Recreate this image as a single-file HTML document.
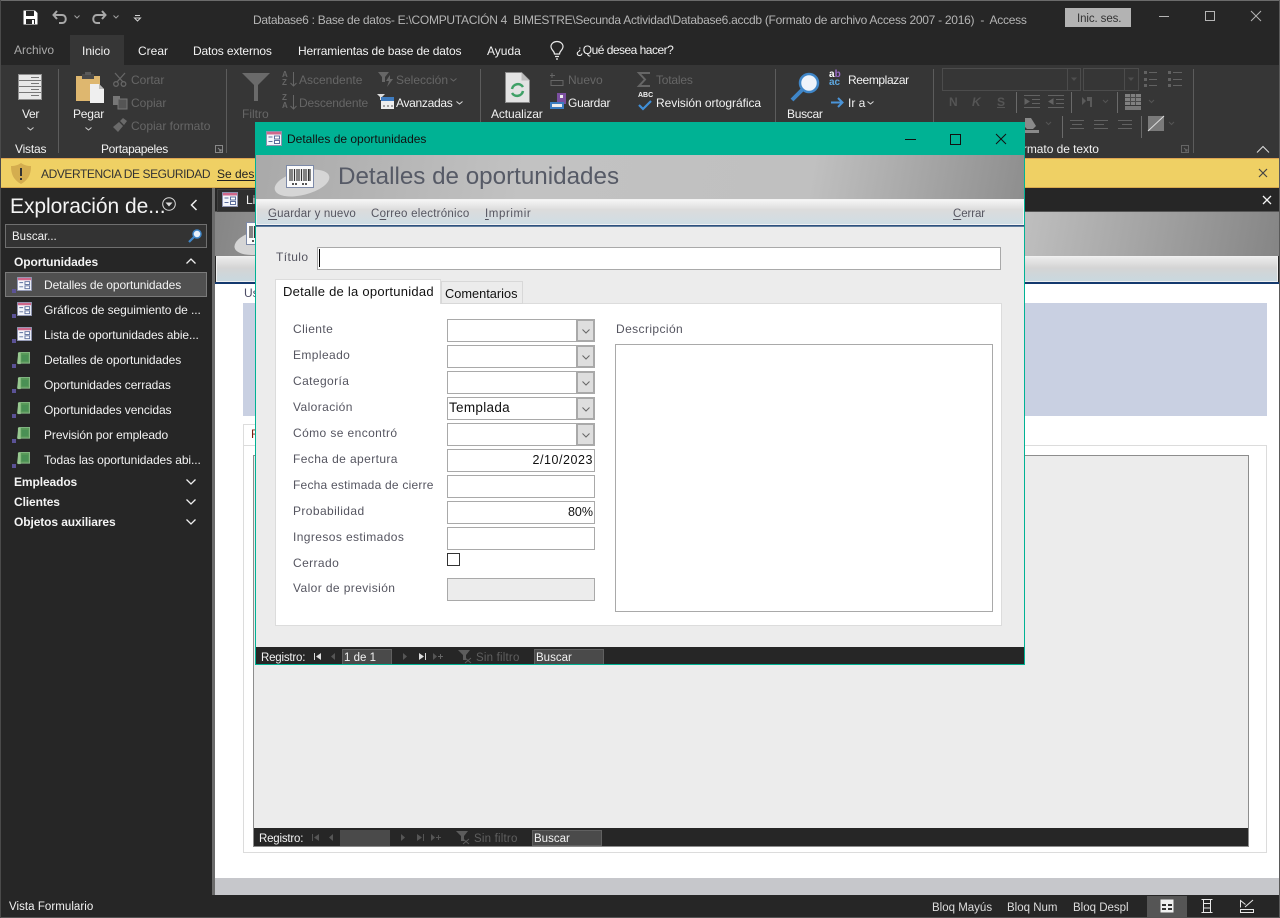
<!DOCTYPE html>
<html lang="es">
<head>
<meta charset="utf-8">
<title>Detalles de oportunidades</title>
<style>
html,body{margin:0;padding:0;width:1280px;height:918px;overflow:hidden;background:#262626}
body{position:relative;font-family:"Liberation Sans",sans-serif;font-size:12px;color:#f0f0f0}
.t{position:absolute;line-height:14px;white-space:pre}
.b{position:absolute;box-sizing:border-box}
.d{color:#666}
.w{color:#f2f2f2}
.h{font-weight:bold;color:#f4f4f4}
.l{color:#555560;letter-spacing:.4px}
.k{color:#111}
.n{letter-spacing:-.09px}
svg{position:absolute;overflow:visible}
.sep{position:absolute;width:1px;background:#5c5c5c;top:69px;height:84px}
.f{position:absolute;box-sizing:border-box;left:447px;width:148px;height:23px;background:#fff;border:1px solid #a9a9a9}
.dd{position:absolute;right:0;top:0;width:18px;height:21px;background:#dedede;border:2px solid #a9a9a9;border-width:1px 1px 1px 2px;box-sizing:border-box}
.u{text-decoration:underline;text-underline-offset:2px;text-decoration-thickness:1px}
</style>
</head>
<body>
<svg width="0" height="0" style="position:absolute">
<defs>
<symbol id="frm" viewBox="0 0 16 15">
<rect x=".5" y=".5" width="15" height="14" fill="#f4f6fb" stroke="#8d93b0"/>
<rect x="1" y="1" width="14" height="2.5" fill="#d0688c"/>
<path d="M2.5 6h4M2.5 10.500h4" stroke="#5d6f9e" fill="none"/>
<rect x="8.500" y="5" width="5" height="3" fill="#fff" stroke="#5d6f9e"/>
<rect x="8.500" y="9.500" width="5" height="3" fill="#fff" stroke="#5d6f9e"/>
</symbol>
<symbol id="rep" viewBox="0 0 14 14">
<path d="M2 .5h11.500v11.500H.5z" fill="#5a9a5a" stroke="#86b886"/>
<rect x="1" y="1" width="3" height="12" fill="#98c890"/>
<path d="M5 3h7v7H5z" fill="#4a9055"/>
</symbol>
<symbol id="bar" viewBox="0 0 28 23">
<rect x=".5" y=".5" width="27" height="22" fill="#fbfbfb" stroke="#7d8aa8"/>
<path d="M4 4v12M6 4v12M8.500 4v12M11 4v12M13 4v12M15.500 4v12M18 4v12M20 4v12M22.500 4v12M24 4v12" stroke="#333" stroke-width="1.200"/>
<path d="M6 19h6M16 19h6" stroke="#555" stroke-width="2" stroke-dasharray="2 1"/>
</symbol>
<symbol id="lnk" viewBox="0 0 5 5"><path d="M0 1h4v4H0z" fill="#5b5296"/></symbol>
</defs>
</svg>

<!-- top window -->
<div class="b" style="left:0;top:0;width:1280px;height:1px;background:#6b6b6b"></div>
<svg style="left:23px;top:10px" width="15" height="15" viewBox="0 0 15 15"><path d="M.5.500h11.500l2.500 2.500v11.500H.5z" fill="#fff"/><rect x="3" y="1" width="8" height="5" fill="#262626"/><rect x="3" y="9" width="9" height="5" fill="#262626"/><rect x="9" y="10" width="2" height="4" fill="#fff"/></svg>
<svg style="left:52px;top:10px" width="16" height="15" viewBox="0 0 16 15" fill="none" stroke="#a8a8a8" stroke-width="2"><path d="M5 1L1.500 5 5 9M2 5h8c5 0 5 8 0 8H7"/></svg>
<svg style="left:74px;top:15px" width="6" height="4" fill="none" stroke="#a0a0a0"><path d="M.5.500L3 3 5.500.5"/></svg>
<svg style="left:91px;top:10px" width="16" height="15" viewBox="0 0 16 15" fill="none" stroke="#a8a8a8" stroke-width="2"><path d="M11 1l3.500 4L11 9M14 5H6c-5 0-5 8 0 8h3"/></svg>
<svg style="left:113px;top:15px" width="6" height="4" fill="none" stroke="#a0a0a0"><path d="M.5.500L3 3 5.500.5"/></svg>
<svg style="left:134px;top:15px" width="7" height="7" fill="none" stroke="#d0d0d0"><path d="M1 .5h5M.5 3h6L3.500 6z" /></svg>
<div class="t" style="left:253px;top:13px;color:#b5b5b5;font-size:12px;letter-spacing:-.275px">Database6 : Base de datos- E:\COMPUTACIÓN 4  BIMESTRE\Secunda Actividad\Database6.accdb (Formato de archivo Access 2007 - 2016)  -  Access</div>
<div class="b" style="left:1065px;top:8px;width:66px;height:19px;background:#b3b3b3"></div>
<div class="t" style="left:1077px;top:12px;color:#333;font-size:11.500px;letter-spacing:-.1px">Inic. ses.</div>
<svg style="left:1159px;top:10px" width="110" height="12" fill="none" stroke="#b5b5b5"><path d="M0 6.500h10M46.500 1.500h9v9h-9zM92 1l10 10M102 1L92 11"/></svg>

<!-- tabs -->
<div class="b" style="left:70px;top:35px;width:54px;height:30px;background:#363636"></div>
<div class="t" style="left:14px;top:43px;color:#a9a9a9">Archivo</div>
<div class="t w" style="left:82px;top:44px">Inicio</div>
<div class="t w" style="left:138px;top:44px">Crear</div>
<div class="t w" style="left:193px;top:44px;letter-spacing:-.14px">Datos externos</div>
<div class="t w" style="left:298px;top:44px;letter-spacing:-.14px">Herramientas de base de datos</div>
<div class="t w" style="left:487px;top:44px">Ayuda</div>
<svg style="left:550px;top:41px" width="14" height="19" viewBox="0 0 14 19" fill="none" stroke="#e8e8e8" stroke-width="1.200"><path d="M4.500 13c0-3-3.500-4-3.500-7.500a6 5 0 0 1 12 0C13 9 9.500 10 9.500 13zM5 15.500h4M6 18h2"/></svg>
<div class="t w" style="left:576px;top:43px;letter-spacing:-.52px">¿Qué desea hacer?</div>

<!-- ribbon -->
<div class="b" style="left:0;top:65px;width:1280px;height:93px;background:#363636"></div>
<div class="sep" style="left:58px"></div>
<div class="sep" style="left:226px"></div>
<div class="sep" style="left:480px"></div>
<div class="sep" style="left:775px"></div>
<div class="sep" style="left:933px"></div>
<div class="sep" style="left:1193px"></div>

<svg style="left:17px;top:73px" width="26" height="28" viewBox="0 0 26 28"><rect x="1.500" y="1.500" width="23" height="25" fill="#e8e8e8" stroke="#8f8f8f"/><path d="M2 7.500h22M2 13.500h22M2 19.500h22M14 4.500h8M14 10.500h8M14 16.500h8M14 22.500h8" stroke="#777"/></svg>
<div class="t w" style="left:22px;top:107px;letter-spacing:-.3px">Ver</div>
<svg style="left:27px;top:127px" width="7" height="4" fill="none" stroke="#d0d0d0"><path d="M.5.500L3.500 3l3-2.500"/></svg>
<div class="t w" style="left:15px;top:142px;letter-spacing:-.2px">Vistas</div>

<svg style="left:75px;top:72px" width="30" height="32" viewBox="0 0 30 32"><path d="M1 4h24v25H1z" fill="#deb76f"/><rect x="7" y="2" width="12" height="5" fill="#4a4a4a"/><rect x="10" y="0" width="6" height="3" fill="#5a5a5a"/><path d="M15 12h9l5 5v14H15z" fill="#efefef"/><path d="M24 12v5h5" fill="#bbb"/></svg>
<div class="t w" style="left:73px;top:107px;letter-spacing:-.2px">Pegar</div>
<svg style="left:85px;top:127px" width="7" height="4" fill="none" stroke="#d0d0d0"><path d="M.5.500L3.500 3l3-2.500"/></svg>
<div class="t w" style="left:101px;top:142px;letter-spacing:-.32px">Portapapeles</div>
<svg style="left:215px;top:145px" width="8" height="8" fill="none" stroke="#888"><path d="M.5 7.500V.5h7v7zM3 3l3 3M6 4v2H4"/></svg>

<svg style="left:113px;top:72px" width="14" height="15" fill="none" stroke="#666" stroke-width="1.300"><path d="M2 1l8 9M12 1l-8 9"/><circle cx="3" cy="12" r="2.300"/><circle cx="10.500" cy="12" r="2.300"/></svg>
<div class="t d" style="left:131px;top:73px">Cortar</div>
<svg style="left:113px;top:95px" width="15" height="15"><path d="M0 1h7v9H0z" fill="#777"/><path d="M5 4h9v10H5z" fill="#555" stroke="#777"/></svg>
<div class="t d" style="left:131px;top:96px">Copiar</div>
<svg style="left:113px;top:118px" width="15" height="14" fill="#6a6a6a"><path d="M0 9l6-5 4 4-5 6zM7 3l3-3 4 3-3 4z"/></svg>
<div class="t d" style="left:131px;top:119px">Copiar formato</div>

<svg style="left:241px;top:72px" width="30" height="30" fill="#6a6a6a"><path d="M1 1h28L17 13v16h-4V13z"/></svg>
<div class="t d" style="left:242px;top:107px">Filtro</div>
<div class="t d" style="left:282px;top:71px;font-size:8px;line-height:8px;font-weight:bold">A<br>Z</div>
<svg style="left:290px;top:72px" width="7" height="15" fill="none" stroke="#666"><path d="M3.500 0v14M.5 11l3 3 3-3"/></svg>
<div class="t d" style="left:299px;top:73px">Ascendente</div>
<div class="t d" style="left:282px;top:94px;font-size:8px;line-height:8px;font-weight:bold">Z<br>A</div>
<svg style="left:290px;top:95px" width="7" height="15" fill="none" stroke="#666"><path d="M3.500 0v14M.5 11l3 3 3-3"/></svg>
<div class="t d" style="left:299px;top:96px;letter-spacing:-.15px">Descendente</div>
<svg style="left:378px;top:72px" width="16" height="15" fill="#666"><path d="M0 0h11L7 5v5H4V5zM12 3l-4 6h3l-2 6 6-8h-3z"/></svg>
<div class="t d" style="left:396px;top:73px">Selección</div>
<svg style="left:450px;top:78px" width="7" height="4" fill="none" stroke="#666"><path d="M.5.500L3.500 3l3-2.500"/></svg>
<svg style="left:377px;top:94px" width="17" height="15"><path d="M0 0h8L5 3v3H3V3z" fill="#ddd"/><rect x="4" y="3" width="13" height="12" fill="#eee"/><rect x="4" y="3" width="13" height="4" fill="#3f7cc0"/><path d="M6 12h2M10 12h2M14 12h2" stroke="#555"/></svg>
<div class="t w" style="left:396px;top:96px;letter-spacing:-.3px">Avanzadas</div>
<svg style="left:456px;top:101px" width="7" height="4" fill="none" stroke="#ddd"><path d="M.5.500L3.500 3l3-2.500"/></svg>

<svg style="left:505px;top:72px" width="25" height="31" viewBox="0 0 25 31"><path d="M.5.500h16l8 8v22H.5z" fill="#e3e3e3" stroke="#8a8a8a"/><path d="M16.500.5v8h8" fill="#bbb"/><path d="M7 17a6 6 0 0 1 11-2M18 19a6 6 0 0 1-11 2" fill="none" stroke="#3fa066" stroke-width="2.500"/></svg>
<div class="t w" style="left:491px;top:107px;letter-spacing:-.1px">Actualizar</div>
<svg style="left:549px;top:72px" width="16" height="15" fill="none" stroke="#666"><path d="M3 1v5M1 3.500h5M2 8.500h12v5H2z"/></svg>
<div class="t d" style="left:568px;top:73px">Nuevo</div>
<svg style="left:550px;top:93px" width="17" height="17"><rect x="7" y="0" width="9" height="11" fill="#7b4fa0"/><rect x="10" y="2" width="3" height="3" fill="#eee"/><rect x="0" y="9" width="14" height="7" fill="#3a7cc0"/><rect x="2" y="11" width="10" height="3" fill="#eee"/></svg>
<div class="t w" style="left:568px;top:96px;letter-spacing:-.25px">Guardar</div>
<svg style="left:637px;top:71px" width="15" height="17" fill="none" stroke="#666" stroke-width="2"><path d="M13 2H2l6 6.500L2 15h11"/></svg>
<div class="t d" style="left:656px;top:73px;letter-spacing:-.2px">Totales</div>
<div class="t w" style="left:638px;top:92px;font-size:7px;line-height:8px;font-weight:bold">ABC</div>
<svg style="left:638px;top:100px" width="15" height="10" fill="none" stroke="#3f8fd8" stroke-width="2.200"><path d="M1 5l4 4 8-8"/></svg>
<div class="t w" style="left:656px;top:96px;letter-spacing:-.05px">Revisión ortográfica</div>

<svg style="left:790px;top:72px" width="30" height="30" viewBox="0 0 30 30"><circle cx="19" cy="11" r="9" fill="#eef3fa" stroke="#3f86c8" stroke-width="2.500"/><path d="M12 18L2 28" stroke="#3f86c8" stroke-width="4"/></svg>
<div class="t w" style="left:787px;top:107px;letter-spacing:-.3px">Buscar</div>
<div class="t" style="left:829px;top:71px;font-size:10px;line-height:8px;color:#fff;font-weight:bold">a<span style="color:#9b6cc8">b</span><br><span style="color:#5fa8e0">ac</span></div>
<div class="t w" style="left:848px;top:73px;letter-spacing:-.4px">Reemplazar</div>
<svg style="left:831px;top:97px" width="13" height="11" fill="none" stroke="#4a94d8" stroke-width="2"><path d="M0 5.500h11M7 1l4.500 4.500L7 10"/></svg>
<div class="t w" style="left:848px;top:96px">Ir a</div>
<svg style="left:867px;top:101px" width="7" height="4" fill="none" stroke="#ddd"><path d="M.5.500L3.500 3l3-2.500"/></svg>

<!-- text format group -->
<svg style="left:0;top:0" width="1280" height="160" fill="none" stroke="#626262">
<g stroke="#4c4c4c"><path d="M942.500 68.500h138v22h-138zM1067.500 68.500v22M1083.500 68.500h55v22h-55zM1124.500 68.500v22"/></g>
<path d="M1071 77.500h6l-3 3.500zM1128 77.500h6l-3 3.500z" fill="#4f4f4f" stroke="none"/>
<path d="M1149 72.500h8M1149 79.500h8M1149 85.500h8M1173 72.500h9M1173 79.500h9M1173 85.500h9"/>
<path d="M1144 71h3v3h-3zM1144 78h3v3h-3zM1144 84h3v3h-3z" fill="#626262" stroke="none"/>
<path d="M1168 71h3v3h-3zM1168 78h3v3h-3zM1168 84h3v3h-3z" fill="#626262" stroke="none"/>
<path d="M1016.500 92v21M1071.500 92v21M1117.500 92v21M1062.500 116v22M1141.500 116v22" stroke="#6a6a6a"/>
<path d="M1024 95.500h16M1032 99.500h8M1032 103.500h8M1024 107.500h16M1048 95.500h16M1056 99.500h8M1056 103.500h8M1048 107.500h16"/>
<path d="M1025 99l4 2.500-4 2.500zM1053 99l-4 2.500 4 2.500z" fill="#626262"/>
<path d="M1082 97l4 4-4 4zM1087 97h5v10h-2v-6h-3z" fill="#5a5a5a" stroke="none"/>
<path d="M1103 100l2.500 2.500 2.500-2.500M1149 100l2.500 2.500 2.500-2.500M1169 122l2.500 2.500 2.500-2.500M1046 122l2.500 2.500 2.500-2.500" stroke="#555"/>
<rect x="1125" y="94" width="16" height="11" fill="#808080" stroke="none"/>
<path d="M1125 97.500h16M1125 101.500h16M1130.500 94v11M1135.500 94v11" stroke="#4a4a4a"/>
<rect x="1125" y="106" width="16" height="4" fill="#777" stroke="none"/>
<path d="M1070 120.500h14M1072 124.500h10M1070 128.500h14M1094 120.500h14M1094 124.500h10M1094 128.500h14M1118 120.500h14M1122 124.500h10M1118 128.500h14"/>
<rect x="1148" y="116" width="16" height="15" fill="#7a7a7a" stroke="none"/>
<path d="M1148 131l16-15" stroke="#ddd"/>
<path d="M1025 118l6 0 5 8-3 3h-6l-2-2z" fill="#8a8a8a" stroke="none"/>
<rect x="1025" y="130" width="14" height="3" fill="#8a8a8a" stroke="none"/>
</svg>
<div class="t" style="left:949px;top:95px;font-weight:bold;color:#555">N</div>
<div class="t" style="left:972px;top:95px;font-weight:bold;font-style:italic;color:#555">K</div>
<div class="t" style="left:997px;top:95px;font-weight:bold;color:#555;text-decoration:underline">S</div>
<div class="t w" style="left:1009px;top:142px;letter-spacing:-.05px">Formato de texto</div>
<svg style="left:1181px;top:145px" width="8" height="8" fill="none" stroke="#666"><path d="M.5 7.500V.5h7v7zM3 3l3 3M6 4v2H4"/></svg>
<svg style="left:1256px;top:145px" width="14" height="8" fill="none" stroke="#ddd"><path d="M1 7.500l6-6 6 6"/></svg>

<!-- security bar -->
<div class="b" style="left:0;top:158px;width:1280px;height:30px;background:#efd064;border-top:1px solid #e0a552;border-bottom:1px solid #d8a94e"></div>
<svg style="left:11px;top:163px" width="20" height="21" viewBox="0 0 20 21"><path d="M10 0c3 2 6 3 10 3 0 9-3 14-10 18C3 17 0 12 0 3c4 0 7-1 10-3z" fill="#d4ad4f"/><path d="M10 5v8" stroke="#333" stroke-width="2"/><rect x="9" y="15" width="2" height="2" fill="#333"/></svg>
<div class="t" style="left:41px;top:167px;color:#333;letter-spacing:-.42px">ADVERTENCIA DE SEGURIDAD</div>
<div class="t u" style="left:217px;top:167px;color:#222">Se deshabilitó</div>
<svg style="left:1258px;top:168px" width="10" height="10" fill="none" stroke="#444" stroke-width="1.200"><path d="M1 1l8 8M9 1L1 9"/></svg>

<!-- nav pane -->
<div class="b" style="left:212px;top:188px;width:3px;height:707px;background:#6b6b6b"></div>
<div class="t" style="left:10px;top:194px;font-size:21px;line-height:25px;color:#f4f4f4;letter-spacing:-.05px">Exploración de...</div>
<svg style="left:162px;top:197px" width="14" height="14" fill="none" stroke="#ddd"><circle cx="7" cy="7" r="6.300"/><path d="M3.500 5.500h7L7 9.500z" fill="#ddd" stroke="none"/></svg>
<svg style="left:190px;top:199px" width="8" height="12" fill="none" stroke="#eee" stroke-width="1.500"><path d="M6.500 1L1.500 6l5 5"/></svg>
<div class="b" style="left:5px;top:224px;width:202px;height:24px;background:#333;border:1px solid #6f6f6f"></div>
<div class="t w" style="left:12px;top:230px;font-size:11.500px">Buscar...</div>
<svg style="left:188px;top:229px" width="14" height="14"><circle cx="9" cy="5" r="4" fill="#e8f0fa" stroke="#3f86c8" stroke-width="1.500"/><path d="M6 8l-5 5" stroke="#3f86c8" stroke-width="2.200"/></svg>

<div class="t h" style="left:14px;top:255px;letter-spacing:-.1px">Oportunidades</div>
<svg style="left:186px;top:258px" width="10" height="6" fill="none" stroke="#eee" stroke-width="1.300"><path d="M.5 5.500L5 1l4.500 4.500"/></svg>
<div class="b" style="left:5px;top:272px;width:202px;height:25px;background:#505050;border:1px solid #7a7a7a"></div>

<svg style="left:12px;top:288px" width="5" height="5"><use href="#lnk"/></svg><svg style="left:17px;top:277px" width="15" height="14"><use href="#frm"/></svg>
<div class="t w n" style="left:44px;top:278px">Detalles de oportunidades</div>
<svg style="left:12px;top:313px" width="5" height="5"><use href="#lnk"/></svg><svg style="left:17px;top:302px" width="15" height="14"><use href="#frm"/></svg>
<div class="t w n" style="left:44px;top:303px">Gráficos de seguimiento de ...</div>
<svg style="left:12px;top:338px" width="5" height="5"><use href="#lnk"/></svg><svg style="left:17px;top:327px" width="15" height="14"><use href="#frm"/></svg>
<div class="t w n" style="left:44px;top:328px">Lista de oportunidades abie...</div>
<svg style="left:12px;top:363px" width="5" height="5"><use href="#lnk"/></svg><svg style="left:17px;top:352px" width="13" height="13"><use href="#rep"/></svg>
<div class="t w n" style="left:44px;top:353px">Detalles de oportunidades</div>
<svg style="left:12px;top:388px" width="5" height="5"><use href="#lnk"/></svg><svg style="left:17px;top:377px" width="13" height="13"><use href="#rep"/></svg>
<div class="t w n" style="left:44px;top:378px">Oportunidades cerradas</div>
<svg style="left:12px;top:413px" width="5" height="5"><use href="#lnk"/></svg><svg style="left:17px;top:402px" width="13" height="13"><use href="#rep"/></svg>
<div class="t w n" style="left:44px;top:403px">Oportunidades vencidas</div>
<svg style="left:12px;top:438px" width="5" height="5"><use href="#lnk"/></svg><svg style="left:17px;top:427px" width="13" height="13"><use href="#rep"/></svg>
<div class="t w n" style="left:44px;top:428px">Previsión por empleado</div>
<svg style="left:12px;top:463px" width="5" height="5"><use href="#lnk"/></svg><svg style="left:17px;top:452px" width="13" height="13"><use href="#rep"/></svg>
<div class="t w n" style="left:44px;top:453px">Todas las oportunidades abi...</div>

<div class="t h" style="left:14px;top:475px;letter-spacing:-.1px">Empleados</div>
<svg style="left:186px;top:479px" width="10" height="6" fill="none" stroke="#eee" stroke-width="1.300"><path d="M.5.500L5 5l4.500-4.500"/></svg>
<div class="t h" style="left:14px;top:495px;letter-spacing:-.1px">Clientes</div>
<svg style="left:186px;top:499px" width="10" height="6" fill="none" stroke="#eee" stroke-width="1.300"><path d="M.5.500L5 5l4.500-4.500"/></svg>
<div class="t h" style="left:14px;top:515px;letter-spacing:-.1px">Objetos auxiliares</div>
<svg style="left:186px;top:519px" width="10" height="6" fill="none" stroke="#eee" stroke-width="1.300"><path d="M.5.500L5 5l4.500-4.500"/></svg>

<!-- main document -->
<div class="b" style="left:215px;top:188px;width:1065px;height:24px;background:#262626;border-bottom:1px solid #555"></div>
<div class="b" style="left:217px;top:189px;width:60px;height:23px;background:#2f2f2f;border:1px solid #3e3e3e"></div>
<svg style="left:222px;top:192px" width="16" height="15"><use href="#frm"/></svg>
<div class="t w" style="left:246px;top:193px">Lista</div>
<svg style="left:1262px;top:195px" width="10" height="10" fill="none" stroke="#f4f4f4" stroke-width="1.300"><path d="M1 1l8 8M9 1L1 9"/></svg>

<div class="b" style="left:215px;top:212px;width:1065px;height:44px;background:linear-gradient(100deg,#858585 0,#bdbdbd 25%,#c0c0c0 75%,#858585 100%)"></div>
<svg style="left:234px;top:222px" width="54" height="33"><ellipse cx="27" cy="20" rx="27" ry="12" fill="#d5d5d5" transform="rotate(-12 27 20)"/></svg>
<svg style="left:246px;top:222px" width="28" height="23"><use href="#bar"/></svg>
<div class="b" style="left:216px;top:256px;width:1062px;height:26px;background:linear-gradient(#ececec 0,#d4d4d4 45%,#c9d8df 100%);border:1px solid #f0f0f0"></div>
<div class="b" style="left:215px;top:282px;width:1065px;height:2px;background:#14396e"></div>
<div class="b" style="left:215px;top:284px;width:1065px;height:594px;background:#fff"></div>
<div class="b" style="left:215px;top:878px;width:1065px;height:17px;background:#c6c7cb"></div>
<div class="t" style="left:244px;top:286px;color:#4c4c66">Usted</div>
<div class="b" style="left:243px;top:303px;width:1024px;height:113px;background:#c9d0e2"></div>
<div class="b" style="left:243px;top:424px;width:40px;height:22px;background:#fff;border:1px solid #ddd;border-bottom:none"></div>
<div class="t" style="left:251px;top:427px;color:#7a1f10">F</div>
<div class="b" style="left:243px;top:445px;width:1024px;height:408px;background:#fff;border:1px solid #dcdcdc"></div>
<div class="b" style="left:253px;top:455px;width:996px;height:392px;background:#ececec;border:1px solid #8d8d8d"></div>
<div class="b" style="left:254px;top:828px;width:994px;height:18px;background:#262626"></div>
<div class="t w" style="left:259px;top:832px;font-size:11.500px;letter-spacing:-.2px">Registro:</div>
<svg style="left:312px;top:834px" width="130" height="8" fill="#555"><path d="M0 0h1v7H0zM7 0v7L2 3.500zM21 0v7l-4-3.500zM89 0l4 3.500L89 7zM105 0l5 3.500-5 3.500zM111 0h1v7h-1zM119 0l4 3.500-4 3.500z"/><path d="M124 3.500h5M126.500 1v5" stroke="#555" fill="none"/></svg>
<div class="b" style="left:340px;top:830px;width:50px;height:16px;background:#4a4a4a"></div>
<svg style="left:456px;top:830px" width="15" height="15" fill="#5c5c5c"><path d="M0 1h12L8 6v5H5V6z"/><path d="M7 9l6 5M13 9l-6 5" stroke="#5c5c5c" fill="none"/></svg>
<div class="t" style="left:474px;top:832px;color:#5f5f5f;font-size:11.500px;letter-spacing:.2px">Sin filtro</div>
<div class="b" style="left:532px;top:830px;width:70px;height:16px;background:#4a4a4a;border:1px solid #606060"></div>
<div class="t w" style="left:534px;top:832px;font-size:11.500px">Buscar</div>

<!-- dialog -->
<div class="b" style="left:255px;top:122px;width:770px;height:543px;background:#ececec;border:1px solid #00b294"></div>
<div class="b" style="left:255px;top:122px;width:770px;height:33px;background:#00b294"></div>
<svg style="left:266px;top:131px" width="16" height="15"><use href="#frm"/></svg>
<div class="t k" style="left:287px;top:132px">Detalles de oportunidades</div>
<svg style="left:905px;top:133px" width="106" height="12" fill="none" stroke="#111"><path d="M0 6.500h11M45.500 1.500h10v10h-10zM91 1l10 10M101 1L91 11"/></svg>
<div class="b" style="left:256px;top:155px;width:768px;height:44px;background:linear-gradient(100deg,#a9a9a9 0,#c2c2c2 35%,#c0c0c0 72%,#8e8e8e 100%)"></div>
<svg style="left:275px;top:165px" width="54" height="33"><ellipse cx="27" cy="18" rx="28" ry="12" fill="#d6d6d6" transform="rotate(-14 27 18)"/></svg>
<svg style="left:286px;top:165px" width="28" height="23"><use href="#bar"/></svg>
<div class="t" style="left:338px;top:162px;font-size:24.200px;line-height:30px;color:#565a66">Detalles de oportunidades</div>
<div class="b" style="left:256px;top:199px;width:768px;height:26px;background:linear-gradient(#f5f5f5 0,#dcdcdc 40%,#cfdde4 100%);border:1px solid #f2f2f2"></div>
<div class="b" style="left:256px;top:225px;width:768px;height:2px;background:linear-gradient(#14396e,#7c97ad)"></div>
<div class="t l" style="left:268px;top:207px;font-size:11.500px;letter-spacing:.15px"><span class="u">G</span>uardar y nuevo</div>
<div class="t l" style="left:371px;top:207px;font-size:11.500px;letter-spacing:.25px">C<span class="u">o</span>rreo electrónico</div>
<div class="t l" style="left:485px;top:207px;font-size:11.500px;letter-spacing:.6px"><span class="u">I</span>mprimir</div>
<div class="t l" style="left:953px;top:207px;font-size:11.500px;letter-spacing:-.1px"><span class="u">C</span>errar</div>

<div class="t l" style="left:276px;top:250px">Título</div>
<div class="b" style="left:317px;top:247px;width:684px;height:23px;background:#fff;border:1px solid #a9a9a9"></div>
<div class="b" style="left:319px;top:249px;width:1px;height:18px;background:#000"></div>

<div class="b" style="left:275px;top:303px;width:727px;height:323px;background:#fff;border:1px solid #dcdcdc"></div>
<div class="b" style="left:441px;top:281px;width:82px;height:23px;background:#ececec;border:1px solid #d8d8d8"></div>
<div class="t k" style="left:445px;top:287px;font-size:12.800px">Comentarios</div>
<div class="b" style="left:275px;top:279px;width:166px;height:25px;background:#fff;border:1px solid #dcdcdc;border-bottom:none"></div>
<div class="t k" style="left:283px;top:285px;font-size:13px;letter-spacing:.25px">Detalle de la oportunidad</div>

<div class="t l" style="left:293px;top:322px">Cliente</div>
<div class="f" style="top:319px"><div class="dd"><svg style="left:4px;top:8px" width="8" height="5" fill="none" stroke="#666"><path d="M.5.500L4 4l3.500-3.500"/></svg></div></div>
<div class="t l" style="left:293px;top:348px">Empleado</div>
<div class="f" style="top:345px"><div class="dd"><svg style="left:4px;top:8px" width="8" height="5" fill="none" stroke="#666"><path d="M.5.500L4 4l3.500-3.500"/></svg></div></div>
<div class="t l" style="left:293px;top:374px">Categoría</div>
<div class="f" style="top:371px"><div class="dd"><svg style="left:4px;top:8px" width="8" height="5" fill="none" stroke="#666"><path d="M.5.500L4 4l3.500-3.500"/></svg></div></div>
<div class="t l" style="left:293px;top:400px">Valoración</div>
<div class="f" style="top:397px"><div class="dd"><svg style="left:4px;top:8px" width="8" height="5" fill="none" stroke="#666"><path d="M.5.500L4 4l3.500-3.500"/></svg></div></div>
<div class="t k" style="left:449px;top:401px;font-size:13.500px;letter-spacing:.3px">Templada</div>
<div class="t l" style="left:293px;top:426px">Cómo se encontró</div>
<div class="f" style="top:423px"><div class="dd"><svg style="left:4px;top:8px" width="8" height="5" fill="none" stroke="#666"><path d="M.5.500L4 4l3.500-3.500"/></svg></div></div>
<div class="t l" style="left:293px;top:452px">Fecha de apertura</div>
<div class="f" style="top:449px"></div>
<div class="t k" style="right:687px;top:453px;font-size:12.500px;letter-spacing:.55px">2/10/2023</div>
<div class="t l" style="left:293px;top:478px;letter-spacing:.22px">Fecha estimada de cierre</div>
<div class="f" style="top:475px"></div>
<div class="t l" style="left:293px;top:504px">Probabilidad</div>
<div class="f" style="top:501px"></div>
<div class="t k" style="right:687px;top:505px;font-size:12.500px">80%</div>
<div class="t l" style="left:293px;top:530px">Ingresos estimados</div>
<div class="f" style="top:527px"></div>
<div class="t l" style="left:293px;top:556px">Cerrado</div>
<div class="b" style="left:447px;top:553px;width:13px;height:13px;background:#fff;border:1px solid #333"></div>
<div class="t l" style="left:293px;top:581px">Valor de previsión</div>
<div class="f" style="top:578px;background:#ececec"></div>

<div class="t l" style="left:616px;top:322px">Descripción</div>
<div class="b" style="left:615px;top:344px;width:378px;height:268px;background:#fff;border:1px solid #a9a9a9"></div>

<div class="b" style="left:256px;top:647px;width:768px;height:17px;background:#262626"></div>
<div class="t w" style="left:261px;top:651px;font-size:11.500px;letter-spacing:-.2px">Registro:</div>
<svg style="left:314px;top:653px" width="130" height="8" fill="#555"><path d="M0 0h1v7H0zM7 0v7L2 3.500z" fill="#ddd"/><path d="M21 0v7l-4-3.500zM89 0l4 3.500L89 7z"/><path d="M105 0l5 3.500-5 3.500zM111 0h1v7h-1z" fill="#ddd"/><path d="M119 0l4 3.500-4 3.500z"/><path d="M124 3.500h5M126.500 1v5" stroke="#666" fill="none"/></svg>
<div class="b" style="left:342px;top:649px;width:50px;height:15px;background:#4a4a4a;border:1px solid #606060;border-bottom:none"></div>
<div class="t w" style="left:344px;top:651px;font-size:11.500px">1 de 1</div>
<svg style="left:458px;top:649px" width="15" height="15" fill="#5c5c5c"><path d="M0 1h12L8 6v5H5V6z"/><path d="M7 9l6 5M13 9l-6 5" stroke="#5c5c5c" fill="none"/></svg>
<div class="t" style="left:476px;top:651px;color:#5f5f5f;font-size:11.500px;letter-spacing:.2px">Sin filtro</div>
<div class="b" style="left:534px;top:649px;width:70px;height:15px;background:#4a4a4a;border:1px solid #606060;border-bottom:none"></div>
<div class="t w" style="left:536px;top:651px;font-size:11.500px">Buscar</div>

<!-- status bar -->
<div class="b" style="left:0;top:895px;width:1280px;height:23px;background:#262626;border-bottom:1px solid #555"></div>
<div class="t w" style="left:9px;top:900px;font-size:11.500px;letter-spacing:.05px">Vista Formulario</div>
<div class="t w" style="left:932px;top:901px;font-size:11.500px;color:#ddd">Bloq Mayús</div>
<div class="t w" style="left:1007px;top:901px;font-size:11.500px;color:#ddd">Bloq Num</div>
<div class="t w" style="left:1073px;top:901px;font-size:11.500px;color:#ddd">Bloq Despl</div>
<div class="b" style="left:1147px;top:896px;width:40px;height:21px;background:#555"></div>
<svg style="left:1160px;top:899px" width="14" height="14"><rect x=".5" y=".5" width="13" height="13" fill="#f0f0f0"/><rect x="2" y="5" width="4" height="2" fill="#333"/><rect x="8" y="5" width="4" height="2" fill="#333"/><rect x="2" y="9" width="4" height="2" fill="#333"/><rect x="8" y="9" width="4" height="2" fill="#333"/></svg>
<svg style="left:1201px;top:899px" width="12" height="14" fill="none" stroke="#e8e8e8"><path d="M.5.500h11M.5 13.500h11M2.500.5v13M9.500.5v13M2.500 4.500h7M2.500 9h7"/></svg>
<svg style="left:1240px;top:899px" width="14" height="14" fill="none" stroke="#e8e8e8"><path d="M.5 8.500v-7l5 4M.5 10.500h13v3H.5zM5 8l8-7"/></svg>
<div class="b" style="left:1279px;top:0;width:1px;height:918px;background:#5a5a5a"></div>
<div class="b" style="left:0;top:0;width:1px;height:918px;background:#4a4a4a"></div>
</body>
</html>
